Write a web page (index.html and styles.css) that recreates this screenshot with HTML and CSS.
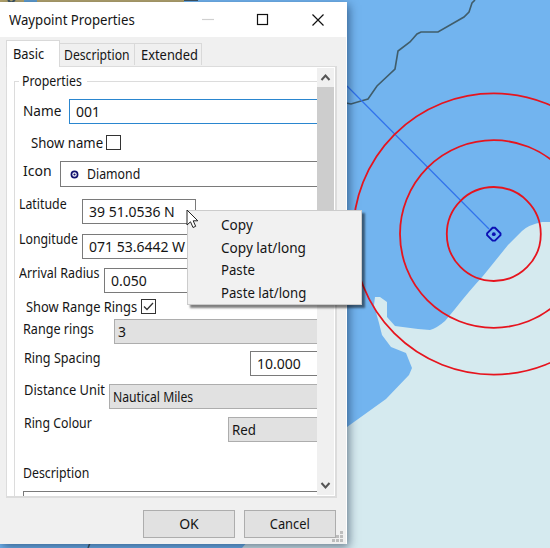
FILE: index.html
```
<!DOCTYPE html>
<html lang="en">
<head>
<meta charset="utf-8">
<title>Waypoint Properties</title>
<link rel="stylesheet" href="styles.css">
</head>
<body>
<div class="desktop">
  <svg class="chart" width="550" height="548" viewBox="0 0 550 548">
    <rect width="550" height="548" fill="#72b4ef"/>
    <rect width="184" height="4" fill="#b3a46c"/>
    <rect x="24" width="13" height="4" fill="#5f9dd0"/>
    <path d="M8 0l3 3 4-3M184 0h14" stroke="#3e5563" stroke-width="2" fill="none"/>
    <path fill="#d5eaef" d="M550 222H542Q528 225 522 231L508 245 483 276Q470 290 455 309L445 321Q437 328 430 330L418 329 395 326 387 317V302L380 297H375L374 305 379 323 382 335 391 347 406 353 412 368 409 375 386 399 347 427 242 548H550Z"/>
    <path d="M346 103L351 104 361 101 368 99 377 86 395 69 398 51 410 42 417 34 421 32H438L464 17 469 12 472 3 475 0" fill="none" stroke="#405d6b" stroke-width="1.6"/>
    <path d="M347 86L489 229" stroke="#3172ec" stroke-width="1.2"/>
    <g fill="none" stroke="#e6141e" stroke-width="1.8"><circle cx="493.800" cy="234" r="47"/><circle cx="493.800" cy="234" r="93.800"/><circle cx="493.800" cy="234" r="140.600"/></g>
    <path d="M492.600 227.800h2.400l5.500 5.500v1.800l-5.500 5.500h-2.400l-5.500-5.500v-1.800z" fill="none" stroke="#0b10b4" stroke-width="1.900"/>
    <circle cx="493.800" cy="234.200" r="1.900" fill="#0b10b4"/>
    <path d="M88 548l2-5" stroke="#3e5563" stroke-width="1.500"/>
  </svg>

  <section class="dialog">
    <header class="titlebar">
      <h1><span class="t t-title">Waypoint Properties</span></h1>
      <svg width="130" height="35" viewBox="0 0 130 35" fill="none" stroke="#111" stroke-width="1.200">
        <path d="M0 17.500h12" stroke="#d0d0d0"/><rect x="55.500" y="12.500" width="10" height="10"/><path d="M110.500 12.500l11 11m0-11l-11 11"/>
      </svg>
    </header>
    <nav class="tabs">
      <span class="tab active"><span class="t t-basic">Basic</span></span>
      <span class="tab second"><span class="t t-desc">Description</span></span>
      <span class="tab third"><span class="t t-ext">Extended</span></span>
    </nav>
    <div class="page">
      <div class="view">
        <fieldset class="group">
          <legend><span class="t t-prop">Properties</span></legend>
          <div class="row r-name"><label class="t">Name</label><div class="field focus"><span class="t">001</span></div></div>
          <div class="row r-show"><label class="t">Show name</label><i class="check"></i></div>
          <div class="row r-icon"><label class="t">Icon</label><div class="field"><svg width="9" height="9" viewBox="0 0 9 9"><circle cx="4.500" cy="4.500" r="3.100" fill="none" stroke="#10106e" stroke-width="1.700"/><circle cx="4.500" cy="4.500" r="1.100" fill="#10106e"/></svg><span class="t">Diamond</span></div></div>
          <div class="row r-lat"><label class="t">Latitude</label><div class="field"><span class="t">39 51.0536 N</span></div></div>
          <div class="row r-lon"><label class="t">Longitude</label><div class="field"><span class="t">071 53.6442 W</span></div></div>
          <div class="row r-arr"><label class="t">Arrival Radius</label><div class="field"><span class="t">0.050</span></div></div>
          <div class="row r-rings"><label class="t">Show Range Rings</label><i class="check"><svg width="13" height="13" viewBox="0 0 13 13"><path d="M2 6.500l3 3 6-6.500" fill="none" stroke="#333" stroke-width="1.300"/></svg></i></div>
          <div class="row r-count"><label class="t">Range rings</label><div class="field grey"><span class="t">3</span></div></div>
          <div class="row r-space"><label class="t">Ring Spacing</label><div class="field"><span class="t">10.000</span></div></div>
          <div class="row r-unit"><label class="t">Distance Unit</label><div class="field grey"><span class="t">Nautical Miles</span></div></div>
          <div class="row r-colour"><label class="t">Ring Colour</label><div class="field grey"><span class="t">Red</span></div></div>
          <div class="row r-text"><label class="t">Description</label></div>
          <div class="memo"></div>
        </fieldset>
      </div>
      <div class="scrollbar">
        <svg width="17" height="19" viewBox="0 0 17 19"><path d="M4.500 12l4-4.500 4 4.500" fill="none" stroke="#555" stroke-width="2"/></svg>
        <div class="thumb"></div>
        <svg width="17" height="19" viewBox="0 0 17 19"><path d="M4.500 7l4 4.500 4-4.500" fill="none" stroke="#555" stroke-width="2"/></svg>
      </div>
    </div>
    <footer class="actions">
      <button><span class="t t-ok">OK</span></button>
      <button><span class="t t-cancel">Cancel</span></button>
      <svg class="grip" width="11" height="11" viewBox="0 0 11 11" fill="#bdbdbd"><path d="M8 0h3v3H8zM4 4h3v3H4zM8 4h3v3H8zM0 8h3v3H0zM4 8h3v3H4zM8 8h3v3H8z"/></svg>
    </footer>
  </section>

  <ul class="menu">
    <li><span class="t m1">Copy</span></li><li><span class="t m2">Copy lat/long</span></li><li><span class="t m3">Paste</span></li><li><span class="t m4">Paste lat/long</span></li>
  </ul>
  <svg class="pointer" width="14" height="20" viewBox="0 0 14 20"><path d="M1 1v15l3.500-3.200 2.500 5.700 2.700-1.200-2.500-5.500h4.600z" fill="#fff" stroke="#222"/></svg>
</div>
</body>
</html>
```
FILE: styles.css
```
* { box-sizing: border-box; }
body { margin: 0; font: 14px/20px "Noto Sans", sans-serif; color: #151515; }
.desktop { position: relative; width: 550px; height: 548px; overflow: hidden; }
.chart { display: block; }
.t { white-space: nowrap; display: inline-block; transform: scaleX(var(--w, 1)); transform-origin: left; }
.t-title { --w: .94; }
.t-basic { --w: .92; }
.t-desc { --w: .87; }
.t-ext { --w: .92; }
.t-prop { --w: .88; }
.t-cancel { --w: .92; transform-origin: center; }
.m2, .m1 { --w: .97; }
.m3, .m4 { --w: .94; }
.dialog { position: absolute; left: 0; top: 2px; width: 347px; height: 542px; background: #f0f0f0; border-right: 1px solid #fff; box-shadow: 2px 3px 9px rgba(0, 20, 50, .5); display: flex; flex-direction: column; }
.titlebar { height: 35px; background: #fff; display: flex; justify-content: space-between; padding-left: 9px; flex: none; }
.titlebar svg { margin-right: 14px; flex: none; }
.titlebar h1 { margin: 8px 0 0; font-size: 14px; font-weight: 400; line-height: 20px; }
.tabs { display: flex; align-items: flex-end; height: 28px; padding-left: 6px; flex: none; margin-bottom: 1px; }
.tab { height: 22px; border: 1px solid #d9d9d9; border-left: 0; border-bottom: 0; padding: 1px 0 0 4px; }
.tab.active { width: 54px; background: #fff; border-left: 1px solid #d9d9d9; padding: 3px 0 0 6px; position: relative; margin-bottom: -2px; height: 27px; }
.second { width: 75px; }
.third { width: 67px; padding-left: 6px; }
.page { margin: 0 9px 0 6px; height: 432px; border: 1px solid #dcdcdc; border-right-width: 2px; border-bottom-width: 2px; background: #fff; display: flex; justify-content: space-between; padding: 1px 1px 1px 0; flex: none; }
.view { width: 311px; height: 428px; overflow: hidden; }
.group { margin: 3px 0 0 7px; padding: 0; border: 0; border-left: 1px solid #dcdcdc; border-top: 1px solid #dcdcdc; height: 440px; min-width: 0; display: block; }
legend { margin-left: 4px; padding: 0 0 0 3px; width: 68px; height: 20px; margin-top: -1px; margin-bottom: -3px; }
.row { display: flex; align-items: flex-start; }
.row label { flex: none; transform: scaleX(var(--w, 1)); }
.field { height: 25px; border: 1px solid #7a7a7a; border-right: 0; background: #fff; display: flex; align-items: center; padding-left: 6px; flex: 1; }
.focus { border-color: #2a86cf; }
.grey { background: #e1e1e1; border-color: #adadad; padding-left: 3px; }
.check { width: 15px; height: 15px; border: 1px solid #333; display: block; flex: none; }
.check svg { display: block; }
.r-name { height: 36px; padding-left: 8px; margin-top: 11px; }
.r-name label { width: 46px; padding-top: 2px; --w: .97; }
.r-show { height: 26px; padding-left: 16px; }
.r-show label { width: 75px; margin-top: -2px; --w: .94; }
.r-icon { height: 38px; padding-left: 8px; }
.r-icon label { width: 37px; }
.r-icon .field { height: 26px; padding-left: 9px; gap: 8px; }
.r-icon .field .t { --w: .88; }
.r-lat { height: 35px; padding-left: 4px; }
.r-lat label, .r-lon label { width: 63px; margin-top: -5px; --w: .88; }
.r-lat .field { flex: none; width: 114px; border-right: 1px solid #7a7a7a; }
.r-lon { height: 34px; padding-left: 4px; }
.r-arr { height: 31px; padding-left: 4px; }
.r-arr label { width: 85px; margin-top: -5px; --w: .89; }
.r-rings { height: 20px; padding-left: 11px; }
.r-rings label { width: 115px; margin-top: -2px; --w: .92; }
.r-count { height: 32px; padding-left: 8px; }
.r-count label { width: 91px; --w: .9; }
.r-space { height: 33px; padding-left: 9px; }
.r-space label { width: 226px; margin-top: -3px; --w: .9; }
.r-unit { height: 33px; padding-left: 9px; }
.r-unit label { width: 85px; margin-top: -4px; --w: .92; }
.r-unit .field .t { --w: .87; }
.r-colour { height: 46px; padding-left: 9px; }
.r-colour label { width: 204px; margin-top: -4px; --w: .88; }
.r-colour .field .t { --w: .95; }
.r-text { height: 28px; padding-left: 8px; }
.r-text label { --w: .88; }
.memo { margin-left: 8px; height: 30px; border: 1px solid #7a7a7a; border-right: 0; }
.scrollbar { width: 17px; background: #f0f0f0; display: flex; flex-direction: column; }
.thumb { height: 208px; background: #cdcdcd; margin-bottom: auto; }
.scrollbar svg { flex: none; }
.actions { position: relative; display: flex; justify-content: flex-end; gap: 9px; padding: 12px 10px 0 0; }
button { width: 92px; height: 28px; background: #e1e1e1; border: 1px solid #adadad; font: inherit; color: inherit; padding: 0; }
.grip { position: absolute; right: 3px; bottom: -4px; }
.menu { position: absolute; left: 187px; top: 210px; width: 175px; height: 95px; margin: 0; padding: 3px 0 0 33px; list-style: none; background: #f1f1f1; border: 1px solid #ccc; box-shadow: 3px 3px 2px rgba(0, 0, 0, .5); }
.menu li { height: 22.500px; line-height: 22px; }
.pointer { position: absolute; left: 186px; top: 209px; }
```
